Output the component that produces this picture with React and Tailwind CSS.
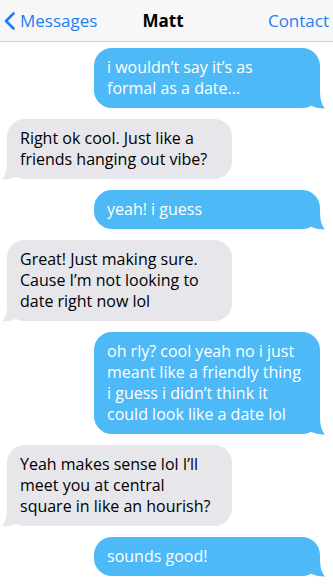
import React from 'react';

const messages = [
  { from: 'me', text: 'i wouldn’t say it’s as formal as a date...' },
  { from: 'them', text: 'Right ok cool. Just like a friends hanging out vibe?' },
  { from: 'me', text: 'yeah! i guess' },
  { from: 'them', text: 'Great! Just making sure. Cause I’m not looking to date right now lol' },
  { from: 'me', text: 'oh rly? cool yeah no i just meant like a friendly thing i guess i didn’t think it could look like a date lol' },
  { from: 'them', text: 'Yeah makes sense lol I’ll meet you at central square in like an hourish?' },
  { from: 'me', text: 'sounds good!' },
];

const Tail = ({ side, color }) => (
  <svg
    className={side === 'me' ? 'absolute -right-[5px] -bottom-[1px]' : 'absolute -left-[5px] -bottom-[1px] -scale-x-100'}
    width="20"
    height="20"
    viewBox="0 0 20 20"
  >
    <path d="M0 0 L15 0 C15 9 16 15 20 19.5 C14 19.5 9 18.5 6 16.5 C4 17.5 2 18 0 18.5 Z" fill={color} />
  </svg>
);

const Bubble = ({ from, text }) => {
  const mine = from === 'me';
  return (
    <div className={mine ? 'flex justify-end pr-[13px]' : 'flex justify-start pl-[7px]'}>
      <div
        className={
          mine
            ? 'relative w-[226px] rounded-[18px] bg-[#4db9f6] pl-[13px] pr-[14px] py-[9px] text-white'
            : 'relative w-[225px] rounded-[18px] bg-[#e6e6eb] pl-[13px] pr-[14px] py-[9px] text-black'
        }
      >
        <p className="relative z-10 text-[16px] leading-[21px]">{text}</p>
        <Tail side={from} color={mine ? '#4db9f6' : '#e6e6eb'} />
      </div>
    </div>
  );
};

export default function App() {
  return (
    <div className="w-[333px] h-[588px] overflow-hidden bg-white" style={{ fontFamily: '"Open Sans", sans-serif' }}>
      {/* Header */}
      <header className="h-[42px] flex items-center bg-[#f7f7f7] border-b border-[#cfcfcf] px-1 text-[17px]">
        <div className="flex-1 flex items-center gap-[4px] text-[#1f7ef6]">
          <svg width="12" height="18" viewBox="0 0 12 18" fill="none">
            <path d="M9.5 1.5 L2 9 L9.5 16.5" stroke="#1f7ef6" strokeWidth="2.6" strokeLinecap="round" strokeLinejoin="round" />
          </svg>
          <span>Messages</span>
        </div>
        <div className="font-bold text-black pr-[7px]">Matt</div>
        <div className="flex-1 text-right text-[#1f7ef6]">Contact</div>
      </header>

      {/* Conversation */}
      <div className="flex flex-col gap-[11px] pt-[6px]">
        {messages.map((m, i) => (
          <Bubble key={i} from={m.from} text={m.text} />
        ))}
      </div>
    </div>
  );
}
